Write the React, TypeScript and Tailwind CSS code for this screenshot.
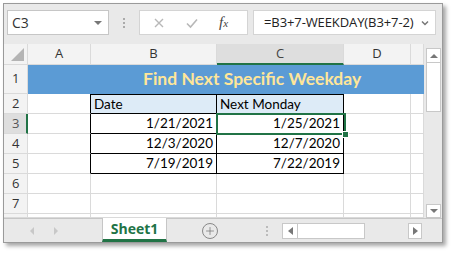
import { Plus } from "lucide-react";

const ui = "font-['Open_Sans','Noto_Sans',sans-serif]";
const cellFont = "font-['Lato','Liberation_Sans',sans-serif]";

const colWidths = "grid-cols-[24px_63px_126px_127px_67px_13px]";
const grid = "border-[#dadada]";

type Row = { n: string; b: string; c: string; head?: boolean; sel?: boolean };

const rows: Row[] = [
  { n: "2", b: "Date", c: "Next Monday", head: true },
  { n: "3", b: "1/21/2021", c: "1/25/2021", sel: true },
  { n: "4", b: "12/3/2020", c: "12/7/2020" },
  { n: "5", b: "7/19/2019", c: "7/22/2019" },
];

function FormulaBar() {
  return (
    <div className={`h-[40px] flex items-start pt-[6px] pl-[3px] ${ui}`}>
      <div className="w-[102px] h-[25px] bg-white border border-[#c6c6c6] flex items-center justify-between pl-[4px] pr-[6px]">
        <span className="text-[14px] text-[#333]">C3</span>
        <span className="w-0 h-0 border-l-[4px] border-r-[4px] border-t-[4px] border-l-transparent border-r-transparent border-t-[#777]" />
      </div>
      <div className="w-[30px] h-[25px] flex flex-col items-center justify-center gap-[2px]">
        <span className="w-[2px] h-[2px] bg-[#aaa]" />
        <span className="w-[2px] h-[2px] bg-[#aaa]" />
        <span className="w-[2px] h-[2px] bg-[#aaa]" />
      </div>
      <div className="w-[109px] h-[25px] bg-white border border-[#d4d4d4] flex items-center">
        <svg width="14" height="14" viewBox="0 0 14 14" className="ml-[12px]">
          <path d="M3 3l8 8M11 3l-8 8" stroke="#b8b8b8" strokeWidth="1.4" />
        </svg>
        <svg width="14" height="14" viewBox="0 0 14 14" className="ml-[19px]">
          <path d="M2 7.5l3.5 3.5L12 3.5" stroke="#b8b8b8" strokeWidth="1.6" fill="none" />
        </svg>
        <span className="ml-[20px] font-['Liberation_Serif',serif] italic text-[15px] text-[#444] leading-none">
          f<span className="text-[11px]">x</span>
        </span>
      </div>
      <div className="ml-[5px] w-[183px] h-[25px] bg-white border border-[#d4d4d4] flex items-center justify-between pl-[10px] pr-[5px]">
        <span className="text-[13px] text-[#222] tracking-[-0.1px]">=B3+7-WEEKDAY(B3+7-2)</span>
        <svg width="10" height="8" viewBox="0 0 10 8">
          <path d="M2 2.5l3 3 3-3" stroke="#777" strokeWidth="1.5" fill="none" />
        </svg>
      </div>
    </div>
  );
}

function Sheet() {
  const hdr = `bg-[#f3f3f3] border-r border-b ${grid} flex items-center justify-center text-[13px] text-[#333] ${ui}`;
  return (
    <div className="flex h-[174px]">
      <div className={`relative w-[420px] bg-white overflow-hidden grid ${colWidths} grid-rows-[21px_29px_repeat(6,20px)_4px]`}>
        {/* header row */}
        <div className={`${hdr} items-end justify-end pr-[3px] pb-[3px]`}>
          <svg width="13" height="13" viewBox="0 0 13 13">
            <polygon points="13,0 13,13 0,13" fill="#b4b4b4" />
          </svg>
        </div>
        <div className={hdr}>A</div>
        <div className={hdr}>B</div>
        <div className={`bg-[#dedede] border-r ${grid} border-b-2 border-b-[#217346] flex items-center justify-center text-[13px] text-[#444] ${ui}`}>C</div>
        <div className={hdr}>D</div>
        <div className={hdr}></div>

        {/* row 1 */}
        <div className={`${hdr} justify-start pl-[8px]`}>1</div>
        <div className={`col-span-5 bg-[#5b9bd5] flex items-center pl-[115px] ${cellFont}`}>
          <span className="text-[17.5px] font-bold text-[#ffe699] whitespace-nowrap">Find Next Specific Weekday</span>
        </div>

        {rows.map((r) => (
          <Cells key={r.n} r={r} hdr={hdr} />
        ))}

        {["6", "7", ""].map((n) => (
          <Blank key={n || "8"} n={n} hdr={hdr} />
        ))}

        {/* selection of C3 */}
        <div className="absolute left-[212px] top-[69px] w-[130px] h-[22px] border-2 border-[#217346]" />
        <div className="absolute left-[338px] top-[87px] w-[7px] h-[7px] bg-[#217346] border border-white" />
      </div>
      <VScroll />
    </div>
  );
}

function Cells({ r, hdr }: { r: Row; hdr: string }) {
  const base = `border-r border-b ${cellFont} text-[13.5px] text-black flex items-center whitespace-nowrap`;
  const fill = r.head ? "bg-[#ddebf7] justify-start pl-[3px]" : "bg-white justify-end pr-[3px]";
  const top = r.head ? "border-t border-t-black" : "";
  return (
    <>
      {r.sel ? (
        <div className={`bg-[#dedede] border-b ${grid} border-r-2 border-r-[#217346] flex items-center pl-[8px] text-[13px] text-[#555] ${ui}`}>
          {r.n}
        </div>
      ) : (
        <div className={`${hdr} justify-start pl-[8px]`}>{r.n}</div>
      )}
      <div className={`border-b ${grid} border-r border-r-black bg-white`} />
      <div className={`${base} ${fill} ${top} border-black`}>{r.b}</div>
      <div className={`${base} ${fill} ${top} border-black`}>{r.c}</div>
      <div className={`border-r border-b ${grid} bg-white`} />
      <div className={`border-r border-b ${grid} bg-white`} />
    </>
  );
}

function Blank({ n, hdr }: { n: string; hdr: string }) {
  return (
    <>
      <div className={`${hdr} justify-start pl-[8px]`}>{n}</div>
      <div className={`border-r border-b ${grid} bg-white`} />
      <div className={`border-r border-b ${grid} bg-white`} />
      <div className={`border-r border-b ${grid} bg-white`} />
      <div className={`border-r border-b ${grid} bg-white`} />
      <div className={`border-r border-b ${grid} bg-white`} />
    </>
  );
}

function VScroll() {
  return (
    <div className="w-[18px] bg-[#e9e9e9] flex flex-col items-center pt-[4px] pl-[1px]">
      <div className="w-[15px] h-[15px] bg-white border border-[#c8c8c8] flex items-center justify-center">
        <span className="w-0 h-0 border-l-[4px] border-r-[4px] border-b-[4px] border-l-transparent border-r-transparent border-b-[#777]" />
      </div>
      <div className="w-[15px] h-[49px] bg-white border border-[#c8c8c8] border-t-0" />
      <div className="flex-1" />
      <div className="w-[15px] h-[14px] bg-white border border-[#c8c8c8] flex items-center justify-center">
        <span className="w-0 h-0 border-l-[4px] border-r-[4px] border-t-[4px] border-l-transparent border-r-transparent border-t-[#777]" />
      </div>
    </div>
  );
}

function TabBar() {
  return (
    <div className={`h-[24px] bg-[#e9e9e9] border-t border-[#c6c6c6] flex items-stretch ${ui}`}>
      <div className="w-[98px] flex items-center pl-[26px] gap-[20px]">
        <span className="w-0 h-0 border-t-[4px] border-b-[4px] border-r-[4px] border-t-transparent border-b-transparent border-r-[#c8c8c8]" />
        <span className="w-0 h-0 border-t-[4px] border-b-[4px] border-l-[4px] border-t-transparent border-b-transparent border-l-[#c8c8c8]" />
      </div>
      <div className="-mt-px w-[65px] bg-white border-l border-r border-[#c6c6c6] border-b-[3px] border-b-[#217346] flex items-center justify-center">
        <span className="text-[14px] font-bold text-[#217346]">Sheet1</span>
      </div>
      <div className="w-[85px] flex items-center justify-center">
        <div className="w-[16px] h-[16px] rounded-full border border-[#888] flex items-center justify-center">
          <Plus size={12} strokeWidth={1.5} color="#777" />
        </div>
      </div>
      <div className="w-[30px] flex flex-col items-center justify-center gap-[2px]">
        <span className="w-[2px] h-[2px] bg-[#bbb]" />
        <span className="w-[2px] h-[2px] bg-[#bbb]" />
        <span className="w-[2px] h-[2px] bg-[#bbb]" />
      </div>
      <div className="flex items-center">
        <div className="w-[16px] h-[16px] bg-white border border-[#c8c8c8] flex items-center justify-center">
          <span className="w-0 h-0 border-t-[4px] border-b-[4px] border-r-[5px] border-t-transparent border-b-transparent border-r-[#777]" />
        </div>
        <div className="w-[67px] h-[16px] bg-white border border-l-0 border-[#c8c8c8]" />
        <div className="w-[43px]" />
        <div className="w-[14px] h-[16px] bg-white border border-[#c8c8c8] flex items-center justify-center">
          <span className="w-0 h-0 border-t-[4px] border-b-[4px] border-l-[5px] border-t-transparent border-b-transparent border-l-[#777]" />
        </div>
      </div>
    </div>
  );
}

export default function App() {
  return (
    <div className="w-[452px] h-[254px] bg-white pt-[3px] pl-[3px]">
      <div className="w-[440px] h-[240px] bg-[#e9e9e9] border border-[#9a9a9a] shadow-[3px_3px_4px_rgba(0,0,0,0.35)] flex flex-col">
        <FormulaBar />
        <Sheet />
        <TabBar />
      </div>
    </div>
  );
}
